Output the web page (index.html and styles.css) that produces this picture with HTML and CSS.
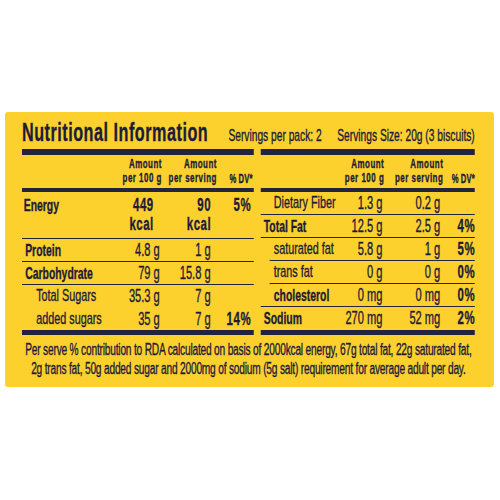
FILE: index.html
```html
<!DOCTYPE html>
<html>
<head>
<meta charset="utf-8">
<link rel="stylesheet" href="styles.css">
</head>
<body>
<div class="card">
  <div class="inner">
    <div class="head">
      <h1 class="title">Nutritional Information</h1>
      <div class="serv"><span>Servings per pack: 2</span><span>Servings Size: 20g (3 biscuits)</span></div>
    </div>
    <div class="tables">
      <div class="tbl left">
        <div class="thead">
          <span></span>
          <span class="h h1">Amount<br>per 100 g</span>
          <span class="h h2">Amount<br>per serving</span>
          <span class="hdv">% DV*</span>
        </div>
        <div class="row energy">
          <span class="lb b e">Energy</span>
          <span class="ev ev1">449<br>kcal</span>
          <span class="ev">90<br>kcal</span>
          <span class="dv">5%</span>
        </div>
        <div class="row">
          <span class="lb b">Protein</span>
          <span class="v">4.8 g</span>
          <span class="v">1 g</span>
          <span class="dv"></span>
        </div>
        <div class="row">
          <span class="lb b">Carbohydrate</span>
          <span class="v">79 g</span>
          <span class="v">15.8 g</span>
          <span class="dv"></span>
        </div>
        <div class="row nb half">
          <span class="lb ind">Total Sugars</span>
          <span class="v">35.3 g</span>
          <span class="v">7 g</span>
          <span class="dv"></span>
        </div>
        <div class="row nb half">
          <span class="lb ind">added sugars</span>
          <span class="v">35 g</span>
          <span class="v">7 g</span>
          <span class="dv">14%</span>
        </div>
      </div>
      <div class="tbl right">
        <div class="thead">
          <span></span>
          <span class="h h1">Amount<br>per 100 g</span>
          <span class="h h2">Amount<br>per serving</span>
          <span class="hdv">% DV*</span>
        </div>
        <div class="row">
          <span class="lb ind">Dietary Fiber</span>
          <span class="v">1.3 g</span>
          <span class="v">0.2 g</span>
          <span class="dv"></span>
        </div>
        <div class="row">
          <span class="lb b">Total Fat</span>
          <span class="v">12.5 g</span>
          <span class="v">2.5 g</span>
          <span class="dv">4%</span>
        </div>
        <div class="row sub">
          <span class="lb ind">saturated fat</span>
          <span class="v">5.8 g</span>
          <span class="v">1 g</span>
          <span class="dv">5%</span>
        </div>
        <div class="row sub">
          <span class="lb ind">trans fat</span>
          <span class="v">0 g</span>
          <span class="v">0 g</span>
          <span class="dv">0%</span>
        </div>
        <div class="row">
          <span class="lb b ind">cholesterol</span>
          <span class="v">0 mg</span>
          <span class="v">0 mg</span>
          <span class="dv">0%</span>
        </div>
        <div class="row nb last">
          <span class="lb b">Sodium</span>
          <span class="v">270 mg</span>
          <span class="v">52 mg</span>
          <span class="dv">2%</span>
        </div>
      </div>
    </div>
    <p class="note">Per serve % contribution to RDA calculated on basis of 2000kcal energy, 67g total fat, 22g saturated fat,<br>2g trans fat, 50g added sugar and 2000mg of sodium (5g salt) requirement for average adult per day.</p>
  </div>
</div>
</body>
</html>
```
FILE: styles.css
```css
html, body {
  margin: 0;
  background: #ffffff;
}

.card {
  margin: 112px 0 0 5px;
  width: 489px;
  height: 275px;
  box-sizing: border-box;
  padding: 5px 0 0 17.3px;
  background: #fcd02d;
  border-radius: 3px;
  overflow: hidden;
}

.inner {
  width: 713px;
  transform: scaleX(0.635);
  transform-origin: 0 0;
  font-family: "Liberation Sans", Arial, sans-serif;
  color: #1c1c3a;
  -webkit-text-stroke: 0.35px #1c1c3a;
}

.head {
  display: flex;
  justify-content: space-between;
  align-items: baseline;
  height: 30px;
  margin-bottom: 2px;
}

.title {
  margin: 0;
  font-size: 25.5px;
  line-height: 30px;
  font-weight: bold;
  letter-spacing: 0.8px;
}

.serv {
  display: flex;
  gap: 24.7px;
  font-size: 16.1px;
  line-height: 30px;
}

.tables {
  display: flex;
  gap: 10.6px;
}

.tbl {
  border-top: 6px solid #23233d;
  border-bottom: 5px solid #23233d;
}

.tbl.left { width: 365.4px; }
.tbl.right { width: 337px; }

.thead,
.row {
  display: grid;
}

.left .thead,
.left .row {
  grid-template-columns: minmax(0, 1fr) 80px 80px 63px;
  padding-right: 5.4px;
}

.right .thead,
.right .row {
  grid-template-columns: minmax(0, 1fr) 62px 91px 54.3px;
}

.thead {
  padding: 2px 0 3px;
  border-bottom: 4px solid #23233d;
  font-weight: bold;
  font-size: 12.5px;
  line-height: 14px;
  letter-spacing: 0.8px;
}

.h {
  text-align: right;
  white-space: nowrap;
}

.left .h1 { margin-right: -3.4px; }
.left .h2 { margin-right: -10px; }
.right .h1 { margin-right: -2.8px; }
.right .h2 { margin-right: -4.8px; }

.hdv {
  align-self: end;
  text-align: right;
  font-size: 12px;
  line-height: 14px;
  letter-spacing: 0.2px;
  white-space: nowrap;
  margin-bottom: -1px;
}

.left .hdv { margin-right: -3px; }

.row {
  height: 22px;
  line-height: 22px;
  border-bottom: 1px solid #23233d;
  font-size: 17px;
  white-space: nowrap;
}

.row.nb { border-bottom: none; }
.row.half { height: 22.5px; }
.row.last { height: 23px; }

.row.energy {
  height: 42px;
  padding-top: 4px;
  line-height: 19px;
}

.row.sub {
  margin-left: 14.2px;
}

.lb {
  font-size: 17px;
}

.left .lb { padding-left: 5px; }
.left .lb.e { padding-left: 2.7px; }
.left .lb.ind { padding-left: 22.4px; }

.right .lb { padding-left: 4.7px; }
.right .lb.ind { padding-left: 20.5px; }
.right .sub .lb.ind { padding-left: 6.3px; }

.lb.b {
  font-weight: bold;
  font-size: 16.4px;
}

.v {
  text-align: right;
  font-size: 17.5px;
}

.ev {
  text-align: right;
  font-weight: bold;
  font-size: 18px;
  letter-spacing: 0.8px;
  margin-right: -0.8px;
}

.ev.ev1 { padding-right: 10.4px; }

.dv {
  text-align: right;
  font-weight: bold;
  font-size: 18px;
  letter-spacing: 1px;
  margin-right: -1px;
}

.note {
  margin: 6px 0 0;
  text-align: center;
  font-size: 16px;
  line-height: 18.6px;
  letter-spacing: -0.3px;
  white-space: nowrap;
}
```
